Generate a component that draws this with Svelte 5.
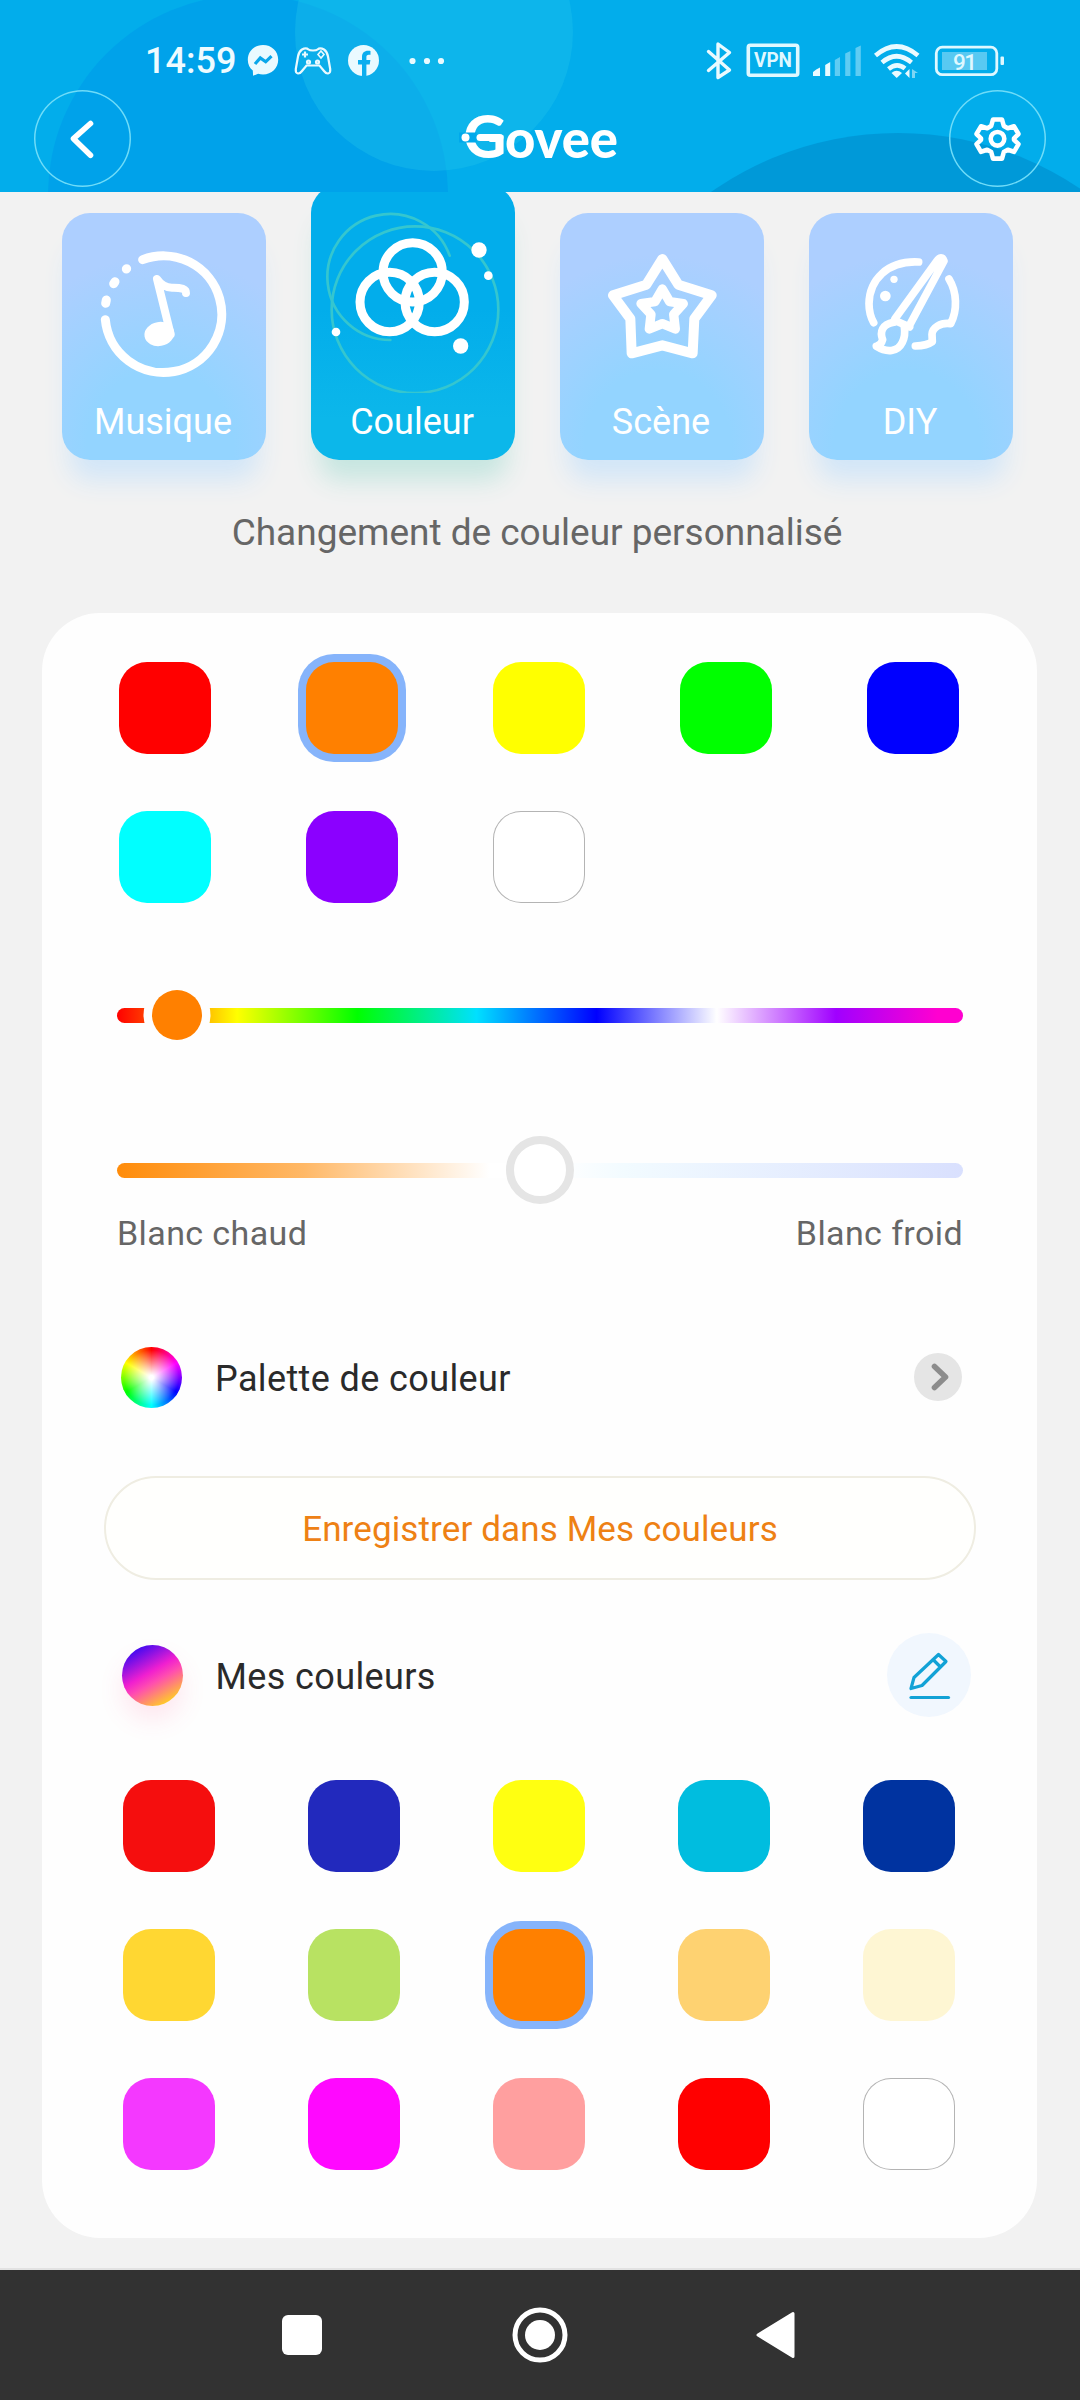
<script>
  const presets = [
    '#ff0000', '#ff8000', '#ffff00', '#00ff00', '#0000ff',
    '#00ffff', '#8b00ff', '#ffffff'
  ];
  const saved = [
    '#f50e0e', '#2229bd', '#ffff11', '#00bddf', '#0033a0',
    '#ffd732', '#b8e262', '#ff8000', '#fed271', '#fef6d3',
    '#f438ff', '#ff08ff', '#ff9f9f', '#ff0000', '#ffffff'
  ];
  let preset = $state(1);
  let mine = $state(7);
</script>

{#snippet swatches(colors, selected, pick)}
  {#each colors as color, i}
    <button
      class="swatch"
      class:selected={i === selected}
      class:white={color === '#ffffff'}
      style="background-color: {color}"
      aria-label={color}
      onclick={() => pick(i)}
    ></button>
  {/each}
{/snippet}

<div class="screen">
  <header>
    <svg class="bubbles" width="1080" height="192" viewBox="0 0 1080 192" aria-hidden="true">
      <circle cx="248" cy="195" r="200" fill="#00a2ea" />
      <circle cx="434" cy="32" r="139" fill="#1ec0ea" fill-opacity=".4" />
      <circle cx="898" cy="459" r="326" fill="#0099d8" />
    </svg>

    <div class="status">
      <div class="group">
        <span class="time">14:59</span>
        <svg class="messenger" width="34" height="35" viewBox="246 43 34 35">
          <path d="M263 45c-8.700 0-15.200 6.400-15.200 14.700 0 4.500 1.900 8.300 5 10.900l.3 5.200 5-2.100c1.500.4 3.200.7 4.900.7 8.700 0 15.200-6.300 15.200-14.700S271.700 45 263 45z" fill="#eafaff" />
          <path d="M255 64l5.300-6 5.400 3.800 5.800-5.600" fill="none" stroke="#0aa7ea" stroke-width="3.200" />
        </svg>
        <svg class="pad" width="38" height="31" viewBox="294 44 38 31" fill="none" stroke="#eafaff" stroke-width="2.200">
          <path d="M302 48.500q4-2.300 6.500 0 1 1 4.500 1t4.500-1q2.500-2.300 6.500 0 3 2 4 7l2.200 12.500q.5 4-2.200 4.500-2 .2-4-2.500l-4.500-5.500h-13l-4.500 5.500q-2 2.700-4 2.500-2.700-.5-2.200-4.500L298 55.500q1-5 4-7z" />
          <path d="M305 50.500v6M302 53.500h6" />
          <path d="M321 50l3 3.500-3 3.500-3-3.500z" stroke-width="1.600" />
          <circle cx="308.500" cy="61" r="1.500" /><circle cx="317.500" cy="61" r="1.500" />
        </svg>
        <svg class="fb" width="33" height="33" viewBox="347 44 33 33">
          <circle cx="363.500" cy="60.500" r="15.500" fill="#eafaff" />
          <path d="M362 76v-11.500h-4v-4.500h4v-3c0-4 2.300-6.200 6-6.200 1.300 0 2.500.2 2.500.2v3.800h-1.800c-1.700 0-2.300 1-2.300 2.200v3h4l-.7 4.500h-3.300V76z" fill="#0caeef" />
        </svg>
        <svg class="more" width="38" height="10" viewBox="408 55 38 10" fill="#eafaff">
          <circle cx="412.500" cy="60" r="3.100" /><circle cx="427" cy="60" r="3.100" /><circle cx="441" cy="60" r="3.100" />
        </svg>
      </div>
      <div class="group">
        <svg width="28" height="40" viewBox="705 40 28 40" fill="none" stroke="#eafaff" stroke-width="3.400" stroke-linejoin="round" stroke-linecap="round">
          <path d="M708.500 50.500L729.500 69 718 76.500V43l11.500 8.500L708.500 69.500" />
        </svg>
        <svg class="vpn" width="54" height="35" viewBox="746 43 54 35">
          <rect x="748.300" y="45.300" width="49.400" height="30" rx="2" fill="none" stroke="#dff8ff" stroke-width="3.600" />
          <text x="754" y="67.300" textLength="38" lengthAdjust="spacingAndGlyphs" font-size="20.500" font-weight="700" fill="#dff8ff">VPN</text>
        </svg>
        <svg class="signal" width="50" height="32" viewBox="812 45 50 32" fill="#eafaff">
          <path d="M813 76v-4q3-3 7-4.500V76zM825.200 76V65l5-3V76z" />
          <path opacity=".4" d="M834.800 76V60l5.200-3V76zM845.200 76V53.500l5.200-2.500V76zM855.500 76V48l5.300-2.500V76z" />
        </svg>
        <svg class="wifi" width="48" height="36" viewBox="873 43 48 36" fill="none" stroke="#eafaff" stroke-width="4.600">
          <path d="M875.500 55.500q21-18 42.500 0M882 62.500q14.500-12.500 29.500 0" />
          <path d="M888.500 69q8.500-7 16.500-.5" />
          <path d="M891.500 73q5-4.500 10.500 0l-5.300 5z" fill="#eafaff" stroke="none" />
          <path d="M909.500 69v9l-4.500-4.500z" fill="#eafaff" stroke="none" />
          <path d="M912 78v-9l6 4h-3v5z" fill="#7ed5f4" stroke="none" />
        </svg>
        <svg class="battery" width="71" height="32" viewBox="934 44 71 32">
          <rect x="936.300" y="46.200" width="60.500" height="27.500" rx="6" fill="none" stroke="#dff8ff" stroke-width="2.800" />
          <rect x="942" y="51" width="45" height="18" fill="#58c9f2" />
          <rect x="1000.500" y="55.500" width="3.500" height="8.500" rx="1" fill="#dff8ff" />
          <text x="953" y="68.800" font-size="22.500" font-weight="500" textLength="24" fill="#dff8ff">91</text>
        </svg>
      </div>
    </div>

    <div class="toolbar">
      <button class="round" aria-label="Retour">
        <svg width="97" height="97" viewBox="34 90 97 97" fill="none" stroke="#fff" stroke-width="5.600" stroke-linecap="round" stroke-linejoin="round">
          <path d="M90.500 123.500L73.500 138.700 90.500 155.200" />
        </svg>
      </button>
      <svg class="logo" width="200" height="97" viewBox="440 90 200 97" fill="#fff">
        <text y="158.300" font-weight="900"><tspan x="463.500" font-size="59">G</tspan><tspan x="505" font-size="54" textLength="113" lengthAdjust="spacingAndGlyphs">ovee</tspan></text>
        <path d="M459 132.500H476.500V142.500H459z" fill="#01a9eb" />
        <path d="M480 137.500H500" stroke="#fff" stroke-width="7" stroke-linecap="round" />
        <circle cx="465.500" cy="137.500" r="4" />
      </svg>
      <button class="round" aria-label="Réglages">
        <svg width="97" height="97" viewBox="949 90 97 97" fill="none" stroke="#fff" stroke-width="4.600" stroke-linejoin="round">
          <path d="M993 119.500h9l1.800 6.500 4 2.300 6.200-2 4.500 7.700-4.500 4.300v1.500l4.500 4.300-4.500 7.700-6.200-2-4 2.300-1.800 6.500h-9l-1.800-6.500-4-2.300-6.200 2-4.500-7.700 4.500-4.300v-1.500l-4.500-4.300 4.500-7.700 6.200 2 4-2.300z" />
          <circle cx="997.500" cy="138.800" r="6.800" />
        </svg>
      </button>
    </div>
  </header>

  <main>
    <nav class="modes">
      <button class="mode">
        <svg width="204" height="180" viewBox="65 98 612 540" fill="none" stroke="#fff" stroke-width="27" stroke-linecap="round">
          <path d="M307 238A175 175 0 1 1 195 418" />
          <path d="M258 266l1-1M224 304l-4 6M198 359l-2 10" />
          <g stroke-width="24" stroke-linejoin="round">
            <path d="M391 462L350 296Q368 322 395 322 438 321 437 338" />
          </g>
          <ellipse cx="357" cy="461" rx="45" ry="36" fill="#fff" stroke="none" transform="rotate(-10 357 461)" />
        </svg>
        <span>Musique</span>
      </button>
      <button class="mode active">
        <svg width="204" height="208" viewBox="812 15 612 624" fill="none" stroke="#fff">
          <g stroke="#35c6cf" stroke-width="8" stroke-linecap="round">
            <circle cx="1124" cy="389" r="250" />
            <path d="M1228 227A189 189 0 1 0 1050 480" />
          </g>
          <g stroke-width="27">
            <circle cx="1117" cy="277" r="89" /><circle cx="1048" cy="366" r="89" /><circle cx="1183" cy="366" r="89" />
          </g>
          <g fill="#fff" stroke="none">
            <circle cx="1316" cy="210" r="23" /><circle cx="1344" cy="287" r="13" />
            <circle cx="887" cy="456" r="13" /><circle cx="1261" cy="498" r="23" />
          </g>
        </svg>
        <span>Couleur</span>
      </button>
      <button class="mode">
        <svg width="204" height="180" viewBox="59 98 612 540" fill="none" stroke="#fff" stroke-width="30" stroke-linejoin="round">
          <path d="M366 236L414 313 514 345 462 415 457 519 366 495 274 519 270 415 218 345 318 313z" />
          <path stroke-width="28" d="M366 326L388 364 429 370 400 402 405 446 366 430 327 446 332 402 302 370 344 364z" />
        </svg>
        <span>Scène</span>
      </button>
      <button class="mode">
        <svg width="204" height="180" viewBox="806 98 612 540" fill="none" stroke="#fff" stroke-width="23" stroke-linecap="round" stroke-linejoin="round">
          <path d="M1135 245C1040 240 987 300 986 370Q986 402 1000 427" />
          <path d="M1226 296C1250 335 1252 390 1231 430 1200 426 1176 442 1175 462L1176 484Q1160 496 1125 497" />
          <path d="M1064 415L1189 243Q1204 222 1211 242L1107 436M1062 420L1108 440" />
          <path d="M1060 426C1025 432 1018 455 1027 478 1024 490 1018 496 1008 498 1040 518 1072 515 1086 486Q1096 466 1092 440" />
          <g fill="#fff" stroke="none"><circle cx="1061" cy="297" r="11" /><circle cx="1035" cy="347" r="16" /></g>
        </svg>
        <span>DIY</span>
      </button>
    </nav>

    <h1>Changement de couleur personnalisé</h1>

    <section class="panel">
      <div class="grid presets">
        {@render swatches(presets, preset, (i) => (preset = i))}
      </div>

      <div class="slider hue"><i class="thumb"></i></div>
      <div class="slider temp"><i class="thumb"></i></div>
      <div class="ends"><span>Blanc chaud</span><span>Blanc froid</span></div>

      <div class="row palette">
        <i class="wheel"></i>
        <span>Palette de couleur</span>
        <svg width="48" height="48" viewBox="0 0 48 48">
          <circle cx="24" cy="24" r="24" fill="#e5e5e5" />
          <path d="M20.500 13.500L31.500 24 20.500 34.500" fill="none" stroke="#8c8c8c" stroke-width="5.600" stroke-linecap="round" stroke-linejoin="round" />
        </svg>
      </div>

      <button class="save">Enregistrer dans Mes couleurs</button>

      <div class="row mine">
        <i class="dusk"></i>
        <span>Mes couleurs</span>
        <svg width="84" height="84" viewBox="887 1632 84 84" fill="none" stroke="#12a2d6" stroke-width="3.200" stroke-linecap="round" stroke-linejoin="round">
          <circle cx="929" cy="1674" r="42" fill="#f1f7fe" stroke="none" />
          <path d="M911 1687.500L914 1676.500 938.500 1653.500 946 1660.500 922 1684.500zM933 1658.500L940.500 1666" />
          <path d="M911 1696.500H948.500" />
        </svg>
      </div>

      <div class="grid saved">
        {@render swatches(saved, mine, (i) => (mine = i))}
      </div>
    </section>
  </main>

  <footer>
    <svg width="40" height="40" viewBox="0 0 40 40"><rect width="40" height="40" rx="6" fill="#fff" /></svg>
    <svg class="home" width="56" height="56" viewBox="0 0 56 56">
      <circle cx="28" cy="28" r="25" fill="none" stroke="#fff" stroke-width="5" /><circle cx="28" cy="28" r="15" fill="#fff" />
    </svg>
    <svg width="40" height="48" viewBox="0 0 40 48"><path d="M2 24L37 2.500V45.500z" fill="#fff" stroke="#fff" stroke-width="3" stroke-linejoin="round" /></svg>
  </footer>
</div>

<style>
  :global(body) { margin: 0; background: #f2f2f2; }
  .screen {
    width: 1080px;
    height: 2400px;
    display: flex;
    flex-direction: column;
    overflow: hidden;
    background: #f2f2f2;
    font-family: Roboto, "Liberation Sans", sans-serif;
  }
  button { border: 0; padding: 0; margin: 0; background: none; font: inherit; }
  svg { display: block; flex: none; }

  header { position: relative; z-index: 1; height: 192px; flex: none; background: #02adeb; }
  .bubbles { position: absolute; inset: 0; }
  .status {
    position: relative;
    box-sizing: border-box;
    height: 90px;
    padding: 31px 75px 0 145px;
    display: flex;
    justify-content: space-between;
  }
  .group { display: flex; align-items: center; height: 59px; }
  .time { width: 101px; font-size: 36px; line-height: 59px; padding-top: 2px; color: #eefbff; font-weight: 500; white-space: nowrap; }
  .pad { margin-left: 14px; }
  .fb { margin-left: 15px; }
  .more { margin-left: 28px; }
  .vpn { margin-left: 13px; }
  .signal { margin-left: 12px; }
  .wifi { margin-left: 11px; }
  .battery { margin-left: 13px; }

  .toolbar { position: relative; display: flex; align-items: center; justify-content: space-between; padding: 0 34px; }
  .round { box-sizing: border-box; width: 97px; height: 97px; border-radius: 50%; box-shadow: inset 0 0 0 1.500px #6fdcf8; }
  .logo { font-family: Lato, sans-serif; }

  main { flex: 1; }
  .modes { display: flex; gap: 45px; margin-left: 61.500px; align-items: flex-end; height: 268px; }
  .mode {
    width: 204px;
    height: 247px;
    border-radius: 28px;
    display: flex;
    flex-direction: column;
    color: #fff;
    font-size: 36px;
    background: radial-gradient(ellipse 90% 78% at 48% 95%, #93d4ff 40%, #adcfff 100%);
    box-shadow: 0 28px 26px -8px #d2e6f8;
  }
  .mode.active {
    height: 275px;
    background: linear-gradient(180deg, #02adeb 45%, #0cb7ea 85%);
    box-shadow: 0 28px 26px -8px #c6e6e0;
  }
  .mode span { width: 203px; text-align: center; line-height: 50px; padding-top: 4px; }

  h1 {
    margin: 48px 0 0;
    width: 1074px;
    text-align: center;
    font-size: 37px;
    line-height: 50px;
    font-weight: 400;
    color: #666;
    letter-spacing: -.02px;
  }

  .panel {
    box-sizing: border-box;
    width: 995px;
    height: 1625px;
    margin: 55px 0 0 42px;
    padding-top: 49px;
    border-radius: 58px;
    background: #fefefe;
  }
  .grid { display: grid; grid-auto-rows: 92px; row-gap: 57px; }
  .presets { grid-template-columns: repeat(5, 92px); column-gap: 95px; margin-left: 77px; }
  .saved { grid-template-columns: repeat(5, 92px); column-gap: 93px; margin: 64px 0 0 81px; }
  .swatch { width: 92px; height: 92px; border-radius: 28px; }
  .swatch.selected { box-shadow: 0 0 0 8px #86b4fb; }
  .swatch.white { box-shadow: inset 0 0 0 1px #b4b4b4; }

  .slider { width: 846px; margin-left: 75px; display: flex; align-items: center; position: relative; }
  .slider::before { content: ""; flex: 1; height: 15px; border-radius: 8px; }
  .hue { height: 50px; margin-top: 87px; }
  .hue::before {
    background: linear-gradient(90deg, #ff0000, #ffff00 14.200%, #00ff00 28.400%, #00e0ff 42.500%, #0000ff 56.700%, #fff 70.900%, #a000ff 85%, #ff00d0 97%);
  }
  .thumb { position: absolute; border-radius: 50%; }
  .hue .thumb { left: 35px; width: 50px; height: 50px; background: #ff8000; box-shadow: 0 0 0 8.500px #fefefe; }
  .temp { height: 68px; margin-top: 96px; }
  .temp::before { background: linear-gradient(90deg, #ff8c0a, #ffb866 22%, #fff 44%, #fff 52%, #f2fbff 60%, #d9e0fe 100%); }
  .temp .thumb { left: 389px; box-sizing: border-box; width: 68px; height: 68px; border: 8.500px solid #e5e5e5; background: #fff; }

  .ends { display: flex; justify-content: space-between; width: 846px; margin: 9px 0 0 75px; font-size: 34px; line-height: 40px; color: #666; letter-spacing: .4px; }

  .row { display: flex; align-items: center; color: #2a2a2a; font-size: 36px; line-height: 50px; letter-spacing: .38px; }
  .row span { flex: 1; padding-top: 3px; }
  .row i { width: 61px; height: 61px; border-radius: 50%; }
  .palette { height: 62px; margin: 93px 75px 0 79px; }
  .palette span { margin-left: 33px; }
  .wheel {
    background:
      radial-gradient(circle, #fff 5%, rgba(255, 255, 255, 0) 64%),
      conic-gradient(#f00, #f0f 60deg, #00f 120deg, #0ff 180deg, #0f0 240deg, #ff0 300deg, #f00);
  }
  .save {
    box-sizing: border-box;
    display: block;
    width: 872px;
    height: 104px;
    margin: 68px 0 0 62px;
    padding-top: 3px;
    border: 2px solid #efede2;
    border-radius: 52px;
    background: #fffffd;
    color: #ee8114;
    font-size: 35px;
    letter-spacing: .12px;
  }
  .mine { height: 84px; margin: 53px 66px 0 79.500px; }
  .mine span { margin-left: 33px; }
  .dusk {
    background: linear-gradient(150deg, #2a06f5 8%, #f01fd0 45%, #ff4db0 58%, #ffe011 92%);
    box-shadow: 0 14px 24px rgba(255, 80, 140, .13);
  }
  .saved { margin-top: 63px; }

  footer {
    box-sizing: border-box;
    height: 130px;
    flex: none;
    display: flex;
    align-items: center;
    padding-left: 282px;
    background: #323232;
    box-shadow: 0 -2px 0 #e2e2e2;
  }
  .home { margin: 0 188px 0 190px; }
</style>
